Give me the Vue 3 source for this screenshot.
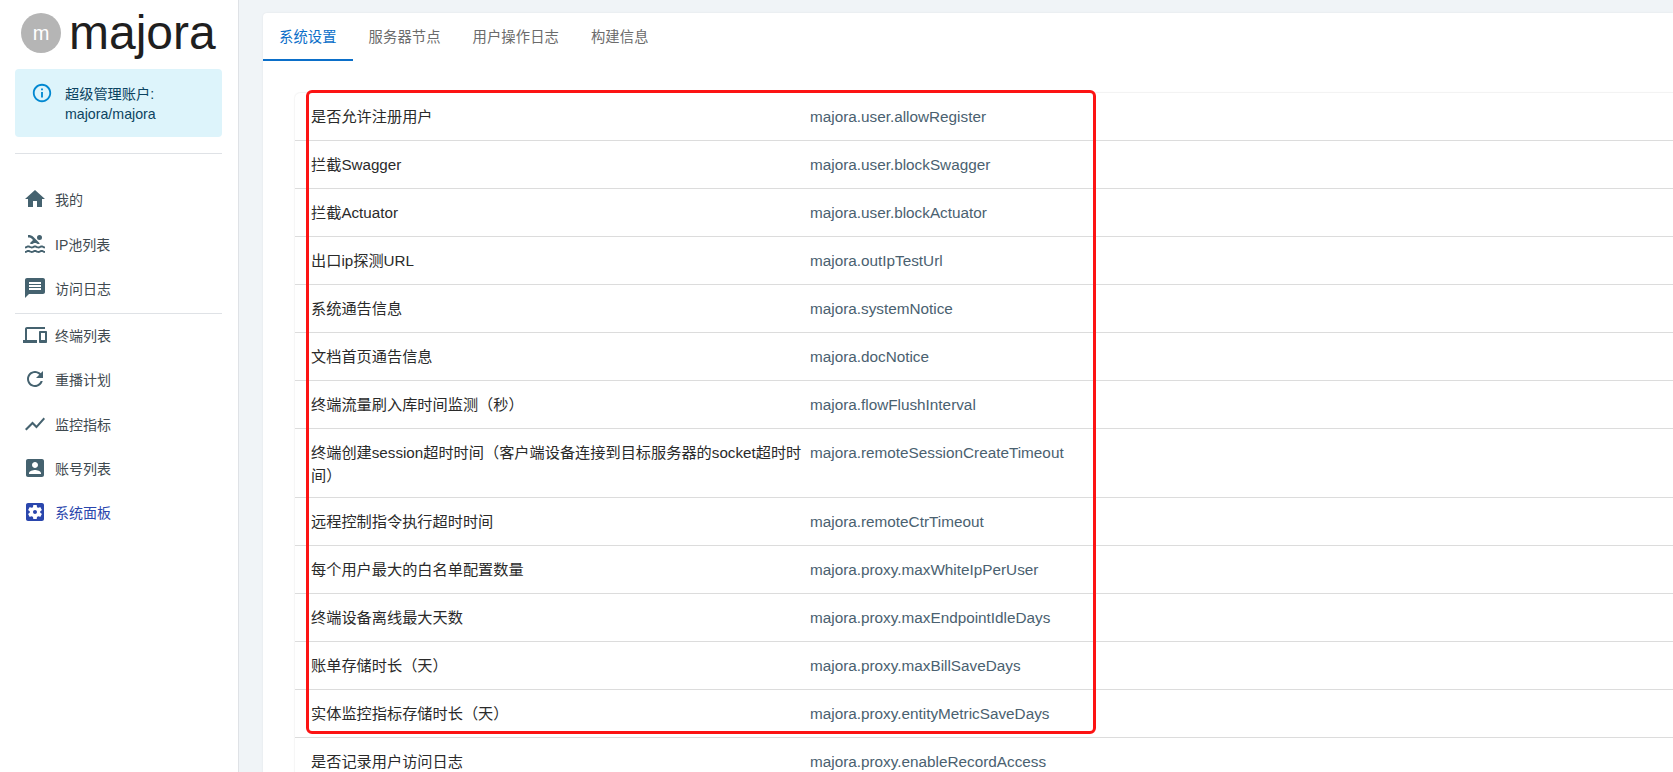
<script setup>
const icons = {
  home: 'M10 20v-6h4v6h5v-8h3L12 3 2 12h3v8z',
  pool: 'M22 21c-1.11 0-1.73-.37-2.18-.64-.37-.22-.6-.36-1.15-.36-.56 0-.78.13-1.15.36-.46.27-1.07.64-2.18.64s-1.73-.37-2.18-.64c-.37-.22-.6-.36-1.15-.36-.56 0-.78.13-1.15.36-.46.27-1.08.64-2.19.64-1.11 0-1.73-.37-2.18-.64-.37-.23-.6-.36-1.15-.36s-.78.13-1.15.36c-.46.27-1.08.64-2.19.64v-2c.56 0 .78-.13 1.15-.36.46-.27 1.08-.64 2.19-.64s1.73.37 2.18.64c.37.23.59.36 1.15.36.56 0 .78-.13 1.15-.36.46-.27 1.08-.64 2.19-.64 1.11 0 1.73.37 2.18.64.37.22.6.36 1.15.36s.78-.13 1.15-.36c.45-.27 1.07-.64 2.18-.64s1.73.37 2.18.64c.37.23.59.36 1.15.36v2zm0-4.5c-1.11 0-1.73-.37-2.18-.64-.37-.22-.6-.36-1.15-.36-.56 0-.78.13-1.15.36-.45.27-1.07.64-2.18.64s-1.73-.37-2.18-.64c-.37-.22-.6-.36-1.15-.36-.56 0-.78.13-1.15.36-.45.27-1.07.64-2.18.64s-1.73-.37-2.18-.64c-.37-.22-.6-.36-1.15-.36s-.78.13-1.15.36c-.47.27-1.09.64-2.2.64v-2c.56 0 .78-.13 1.15-.36.45-.27 1.07-.64 2.18-.64s1.73.37 2.18.64c.37.22.6.36 1.15.36.56 0 .78-.13 1.15-.36.45-.27 1.07-.64 2.18-.64s1.73.37 2.18.64c.37.22.6.36 1.15.36s.78-.13 1.15-.36c.45-.27 1.07-.64 2.18-.64s1.73.37 2.18.64c.37.22.6.36 1.15.36v2zM8.67 12c.56 0 .78-.13 1.15-.36.46-.27 1.08-.64 2.19-.64 1.11 0 1.73.37 2.18.64.37.22.6.36 1.15.36s.78-.13 1.15-.36c.12-.07.26-.15.41-.23L10.48 5C8.93 3.45 7.5 2.99 5 3v2.5c1.82-.01 2.89.39 4 1.5l1 1-3.25 3.25c.31.12.56.27.77.39.37.23.59.36 1.15.36zM19 5.5a2.5 2.5 0 1 1-5 0 2.5 2.5 0 0 1 5 0z',
  message: 'M20 2H4c-1.1 0-1.99.9-1.99 2L2 22l4-4h14c1.1 0 2-.9 2-2V4c0-1.1-.9-2-2-2zm-2 12H6v-2h12v2zm0-3H6V9h12v2zm0-3H6V6h12v2z',
  devices: 'M4 6h18V4H4c-1.1 0-2 .9-2 2v11H0v3h14v-3H4V6zm19 2h-6c-.55 0-1 .45-1 1v10c0 .55.45 1 1 1h6c.55 0 1-.45 1-1V9c0-.55-.45-1-1-1zm-1 9h-4v-7h4v7z',
  refresh: 'M17.65 6.35C16.2 4.9 14.21 4 12 4c-4.42 0-7.99 3.58-7.99 8s3.57 8 7.99 8c3.73 0 6.84-2.55 7.73-6h-2.08c-.82 2.33-3.04 4-5.65 4-3.31 0-6-2.69-6-6s2.69-6 6-6c1.66 0 3.14.69 4.22 1.78L13 11h7V4l-2.35 2.35z',
  chart: 'M3.5 18.49l6-6.01 4 4L22 6.92l-1.41-1.41-7.09 7.97-4-4L2 16.99z',
  account: 'M3 5v14c0 1.1.89 2 2 2h14c1.1 0 2-.9 2-2V5c0-1.1-.9-2-2-2H5c-1.11 0-2 .9-2 2zm12 4c0 1.66-1.34 3-3 3s-3-1.34-3-3 1.34-3 3-3 3 1.34 3 3zm-9 8c0-2 4-3.1 6-3.1s6 1.1 6 3.1v1H6v-1z',
  settings: 'M12 10c-1.1 0-2 .9-2 2s.9 2 2 2 2-.9 2-2-.9-2-2-2zm7-7H5c-1.11 0-2 .9-2 2v14c0 1.1.89 2 2 2h14c1.11 0 2-.9 2-2V5c0-1.1-.89-2-2-2zm-1.75 9c0 .23-.02.46-.05.68l1.48 1.16c.13.11.17.3.08.45l-1.4 2.42c-.09.15-.27.21-.43.15l-1.74-.7c-.36.28-.76.51-1.18.69l-.26 1.85c-.03.17-.18.3-.35.3h-2.8c-.17 0-.32-.13-.35-.29l-.26-1.85c-.43-.18-.82-.41-1.18-.69l-1.74.7c-.16.06-.34 0-.43-.15l-1.4-2.42c-.09-.15-.05-.34.08-.45l1.48-1.16c-.03-.23-.05-.46-.05-.69 0-.23.02-.46.05-.68l-1.48-1.16c-.13-.11-.17-.3-.08-.45l1.4-2.42c.09-.15.27-.21.43-.15l1.74.7c.36-.28.76-.51 1.18-.69l.26-1.85c.03-.17.18-.3.35-.3h2.8c.17 0 .32.13.35.29l.26 1.85c.43.18.82.41 1.18.69l1.74-.7c.16-.06.34 0 .43.15l1.4 2.42c.09.15.05.34-.08.45l-1.48 1.16c.03.23.05.46.05.69z'
}
const menuA = [
  { icon: 'home', label: '我的' },
  { icon: 'pool', label: 'IP池列表' },
  { icon: 'message', label: '访问日志' }
]
const menuB = [
  { icon: 'devices', label: '终端列表' },
  { icon: 'refresh', label: '重播计划' },
  { icon: 'chart', label: '监控指标' },
  { icon: 'account', label: '账号列表' },
  { icon: 'settings', label: '系统面板', active: true }
]
const tabs = ['系统设置', '服务器节点', '用户操作日志', '构建信息']
const rows = [
  ['是否允许注册用户', 'majora.user.allowRegister'],
  ['拦截Swagger', 'majora.user.blockSwagger'],
  ['拦截Actuator', 'majora.user.blockActuator'],
  ['出口ip探测URL', 'majora.outIpTestUrl'],
  ['系统通告信息', 'majora.systemNotice'],
  ['文档首页通告信息', 'majora.docNotice'],
  ['终端流量刷入库时间监测（秒）', 'majora.flowFlushInterval'],
  ['终端创建session超时时间（客户端设备连接到目标服务器的socket超时时间）', 'majora.remoteSessionCreateTimeout'],
  ['远程控制指令执行超时时间', 'majora.remoteCtrTimeout'],
  ['每个用户最大的白名单配置数量', 'majora.proxy.maxWhiteIpPerUser'],
  ['终端设备离线最大天数', 'majora.proxy.maxEndpointIdleDays'],
  ['账单存储时长（天）', 'majora.proxy.maxBillSaveDays'],
  ['实体监控指标存储时长（天）', 'majora.proxy.entityMetricSaveDays'],
  ['是否记录用户访问日志', 'majora.proxy.enableRecordAccess']
]
</script>

<template>
  <div class="page">
    <aside class="sidebar">
      <div class="brand">
        <div class="avatar">m</div>
        <div class="brand-name">majora</div>
      </div>
      <div class="alert">
        <svg class="alert-icon" viewBox="0 0 24 24"><path d="M11 7h2v2h-2zm0 4h2v6h-2zm1-9C6.48 2 2 6.48 2 12s4.48 10 10 10 10-4.48 10-10S17.52 2 12 2zm0 18c-4.41 0-8-3.59-8-8s3.59-8 8-8 8 3.59 8 8-3.59 8-8 8z" /></svg>
        <div class="alert-text">超级管理账户:<br />majora/majora</div>
      </div>
      <div class="rule top-rule"></div>
      <nav class="menu">
        <div v-for="m in menuA" :key="m.label" class="item">
          <svg class="item-icon" viewBox="0 0 24 24"><path :d="icons[m.icon]" /></svg>
          <span>{{ m.label }}</span>
        </div>
      </nav>
      <div class="rule mid-rule"></div>
      <nav class="menu">
        <div v-for="m in menuB" :key="m.label" class="item" :class="{ active: m.active }">
          <svg class="item-icon" viewBox="0 0 24 24"><path :d="icons[m.icon]" /></svg>
          <span>{{ m.label }}</span>
        </div>
      </nav>
    </aside>
    <main class="main">
      <section class="card">
        <div class="tabs">
          <div v-for="(t, i) in tabs" :key="t" class="tab" :class="{ on: i === 0 }">{{ t }}</div>
        </div>
        <div class="body">
          <div class="table">
            <div v-for="r in rows" :key="r[1]" class="row">
              <div class="name">{{ r[0] }}</div>
              <div class="key">{{ r[1] }}</div>
            </div>
          </div>
          <div class="mark"></div>
        </div>
      </section>
    </main>
  </div>
</template>

<style>
html, body { margin: 0; overflow: hidden; }
</style>

<style scoped>
.page {
  display: flex;
  width: 1673px;
  height: 772px;
  overflow: hidden;
  background: #f0f4f7;
  font-family: "Liberation Sans", "Noto Sans CJK SC", sans-serif;
}
.sidebar {
  flex: none;
  width: 239px;
  box-sizing: border-box;
  background: #fff;
  border-right: 1px solid #dfe2e6;
  padding: 13px 16px 0 15px;
}
.brand { display: flex; align-items: center; height: 40px; gap: 8px; padding-left: 6px; }
.avatar {
  width: 40px; height: 40px; border-radius: 50%;
  background: #b5b5b5; color: #fff;
  display: flex; align-items: center; justify-content: center;
  font-size: 20px;
}
.brand-name { font-size: 48px; line-height: 40px; color: #1f1f1f; }
.alert {
  display: flex;
  margin-top: 16px;
  height: 68px;
  box-sizing: border-box;
  background: #ddf4fb;
  border-radius: 4px;
  padding: 15px 16px 0 16px;
}
.alert-icon { width: 22px; height: 22px; fill: #0288d1; flex: none; margin-top: -2px; }
.alert-text { margin-left: 12px; font-size: 14.2px; line-height: 20px; color: #0b4361; }
.rule { height: 1px; background: #dfe2e6; }
.top-rule { margin: 16px 0 23px; }
.mid-rule { margin: 2.5px 0 -1px; }
.menu { display: flex; flex-direction: column; }
.item {
  display: flex; align-items: center;
  height: 44.4px;
  padding-left: 8px;
  font-size: 14px;
  color: #3f4a50;
}
.item-icon { width: 24px; height: 24px; fill: #45626f; flex: none; margin-right: 8px; }
.item.active { color: #2a46ad; }
.item.active .item-icon { fill: #2a46ad; }
.main { flex: 1; min-width: 0; padding: 13px 0 0 24px; }
.card {
  background: #fff;
  border-radius: 4px 0 0 0;
  height: 900px;
  box-shadow: 0 0 2px rgba(0, 0, 0, 0.08);
}
.tabs { display: flex; height: 48px; }
.tab {
  height: 48px;
  box-sizing: border-box;
  padding: 0 16px 3px;
  display: flex; align-items: center;
  font-size: 14.3px;
  color: #6b6b6b;
  letter-spacing: 0.1px;
}
.tab.on { color: #0b6fc9; border-bottom: 2px solid #0b6fc9; padding-bottom: 1px; }
.body { position: relative; padding: 31px 0 0 32px; }
.table {
  border-radius: 6px 0 0 0;
  border-top: 1px solid #f3f3f3;
  box-shadow: -1px 0 1px rgba(0, 0, 0, 0.04);
}
.row {
  display: flex;
  align-items: flex-start;
  min-height: 47px;
  border-bottom: 1px solid #dcdcdc;
}
.name {
  width: 493px;
  flex: none;
  padding: 12px 6px 10px 16px;
  font-size: 15.2px;
  line-height: 23px;
  color: #2a2a2a;
}
.key { padding-top: 12px; line-height: 23px; font-size: 15.3px; color: #4a6170; }
.mark {
  position: absolute;
  left: 43px;
  top: 29px;
  width: 790px;
  height: 644px;
  box-sizing: border-box;
  border: 3px solid #fc1313;
  border-radius: 6px;
  pointer-events: none;
}
</style>
